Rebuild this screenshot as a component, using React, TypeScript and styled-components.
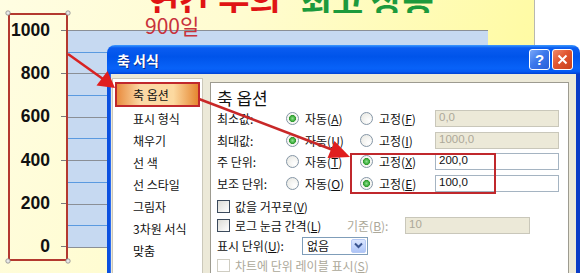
import styled, { createGlobalStyle } from 'styled-components';

const GlobalStyle = createGlobalStyle`
  html, body {
    margin: 0;
    padding: 0;
  }
  body {
    width: 585px;
    height: 273px;
    overflow: hidden;
    background: #fff;
  }
`;

const Page = styled.div`
  position: relative;
  display: flex;
  width: 585px;
  height: 273px;
  overflow: hidden;
  background: linear-gradient(115deg, #fffde2 0%, #fffcd0 35%, #fffba6 75%, #fffa94 100%);
  font-family: 'Noto Sans CJK KR', sans-serif;
`;

const AxisBox = styled.div`
  flex: 0 0 60px;
  height: 248px;
  margin: 13px 0 0 8px;
  border: 2px solid #b3392f;
  box-sizing: border-box;
`;

const AxisLabels = styled.div`
  display: flex;
  flex-direction: column;
  margin-top: -6.7px;
`;

const AxisRow = styled.div`
  height: 43.4px;
  display: flex;
  align-items: center;
  justify-content: flex-end;
`;

const AxisValue = styled.span`
  font: bold 17.5px 'Liberation Sans', Arial, sans-serif;
  color: #111;
`;

const Tick = styled.span`
  width: 5px;
  height: 1px;
  margin-left: 11px;
  background: #7c7c7c;
`;

const ChartColumn = styled.div`
  flex: 0 0 420px;
  display: flex;
  flex-direction: column;
`;

const Header = styled.div`
  height: 30px;
`;

// only the lower part of the big title is visible in the crop
const TitleStrip = styled.div`
  height: 13px;
  overflow: hidden;
  display: flex;
  align-items: flex-end;
  padding-left: 80px;
  gap: 20px;
`;

const TitleText = styled.span<{ $color: string }>`
  font-size: 34px;
  font-weight: 700;
  line-height: 34px;
  margin-bottom: -3.5px;
  color: ${(p) => p.$color};
  white-space: nowrap;
`;

const Subtitle = styled.div`
  position: relative;
  z-index: 1;
  padding-left: 77px;
  margin-top: 1px;
  font-size: 21px;
  line-height: 22px;
  color: #c8323c;
`;

const Plot = styled.div`
  height: 217px;
  background-color: #c6d9f1;
  background-image: repeating-linear-gradient(
    to bottom,
    #8a8f96 0px,
    #8a8f96 1px,
    transparent 1px,
    transparent 21.7px,
    #5a9ae0 21.7px,
    #5a9ae0 22.7px,
    transparent 22.7px,
    transparent 43.4px
  );
  border-bottom: 1px solid #8a8f96;
`;

const ChartEdge = styled.div`
  flex: 1;
  margin-left: 46px;
  background: #fff;
  border-left: 1px solid #b8b8b0;
`;

const Dialog = styled.div`
  position: absolute;
  left: 107px;
  top: 45px;
  width: 473px;
  height: 240px;
  display: flex;
  flex-direction: column;
`;

const TitleBar = styled.div`
  height: 29px;
  flex-shrink: 0;
  display: flex;
  align-items: center;
  gap: 2px;
  padding: 0 7px 0 10px;
  border-radius: 8px 8px 0 0;
  background: linear-gradient(
    to bottom,
    #3d9bff 0%,
    #0a5cf0 10%,
    #0054ea 40%,
    #0862f8 80%,
    #0559f2 92%,
    #0040d2 100%
  );
`;

const DialogTitle = styled.span`
  flex: 1;
  color: #fff;
  font-size: 14px;
  font-weight: 700;
  text-shadow: 1px 1px 0 #0a2a8a;
`;

const TitleButton = styled.div<{ $close?: boolean }>`
  width: 19px;
  height: 19px;
  border: 1px solid #fff;
  border-radius: 3px;
  display: flex;
  align-items: center;
  justify-content: center;
  color: #fff;
  font: bold 15px 'Liberation Sans', Arial, sans-serif;
  background: ${(p) =>
    p.$close
      ? 'linear-gradient(135deg, #f08a6a 0%, #e05530 45%, #c8401c 100%)'
      : 'linear-gradient(135deg, #7aa8f8 0%, #3c78ec 45%, #2a5ed8 100%)'};
`;

const DialogBody = styled.div`
  flex: 1;
  display: flex;
  gap: 7px;
  padding: 4px 0 0 2px;
  background: #ece9d8;
  border-left: 3px solid #0b50e0;
  border-right: 4px solid #0a3cc6;
  box-shadow: inset 1px 0 0 #2c6cf0;
`;

const NavList = styled.div`
  flex: 0 0 91px;
  background: #fff;
  border: 1px solid #cbc8ba;
  box-sizing: border-box;
  padding-top: 4px;
  display: flex;
  flex-direction: column;
`;

const NavItem = styled.div<{ $active?: boolean }>`
  height: 22px;
  display: flex;
  align-items: center;
  padding-left: ${(p) => (p.$active ? '17px' : '20px')};
  margin: ${(p) => (p.$active ? '0 4px 2px 3px' : '0')};
  font-size: 12px;
  color: #111;
  white-space: nowrap;
  background: ${(p) =>
    p.$active ? 'linear-gradient(to right, #e8883a 0%, #fbd9a6 30%, #fcd9a0 70%, #e58630 100%)' : 'none'};
`;

const Panel = styled.div`
  flex: 0 0 359px;
  margin-top: 4px;
  background: #fff;
  border: 1px solid #9d9b90;
  box-sizing: border-box;
  padding: 5px 0 0 6px;
  font-size: 12px;
  color: #111;
`;

const PanelHeading = styled.div`
  height: 20px;
  line-height: 20px;
  font-size: 17px;
`;

const OptionGrid = styled.div`
  display: grid;
  grid-template-columns: 69px 74px 75px 124px;
  grid-auto-rows: 21.5px;
  align-items: center;
`;

const RadioOption = styled.label`
  display: flex;
  align-items: center;
  gap: 6px;
  white-space: nowrap;
`;

const Radio = styled.span<{ $checked?: boolean }>`
  width: 13px;
  height: 13px;
  box-sizing: border-box;
  border-radius: 50%;
  border: 1px solid #8596a6;
  background: ${(p) =>
    p.$checked
      ? 'radial-gradient(circle, #8ee08e 0px, #3fae3f 2.5px, #2f9a2f 3.2px, #f4f4f0 3.8px, #fff 100%)'
      : 'radial-gradient(circle at 70% 70%, #fff 0%, #e6e6e0 100%)'};
`;

const TextBox = styled.div<{ $disabled?: boolean; $width?: number }>`
  width: ${(p) => p.$width ?? 124}px;
  height: 17px;
  box-sizing: border-box;
  padding-left: 3px;
  line-height: 15px;
  border: 1px solid ${(p) => (p.$disabled ? '#c9c7ba' : '#a5b4c2')};
  background: ${(p) => (p.$disabled ? '#ece9d8' : '#fff')};
  color: ${(p) => (p.$disabled ? '#aca899' : '#111')};
  font: 11.5px 'Liberation Sans', Arial, sans-serif;
`;

const CheckRow = styled.div<{ $height?: number; $top?: number }>`
  height: ${(p) => p.$height ?? 19}px;
  margin-top: ${(p) => p.$top ?? 0}px;
  display: flex;
  align-items: center;
  white-space: nowrap;
`;

const CheckBox = styled.span<{ $disabled?: boolean }>`
  width: 13px;
  height: 13px;
  flex-shrink: 0;
  box-sizing: border-box;
  margin-right: 5px;
  border: 1px solid ${(p) => (p.$disabled ? '#cfcdc2' : '#3b4a5c')};
  background: ${(p) => (p.$disabled ? '#fff' : 'linear-gradient(135deg, #dcdcd6 0%, #fff 100%)')};
`;

const RowLabel = styled.span<{ $width?: number; $muted?: boolean }>`
  width: ${(p) => (p.$width ? `${p.$width}px` : 'auto')};
  flex-shrink: 0;
  color: ${(p) => (p.$muted ? '#aca899' : '#111')};
`;

const Select = styled.div`
  width: 66px;
  height: 18px;
  box-sizing: border-box;
  display: flex;
  align-items: center;
  border: 1px solid #7f9db9;
  background: #fff;
`;

const SelectText = styled.span`
  flex: 1;
  padding-left: 4px;
`;

const SelectButton = styled.span`
  width: 15px;
  height: 14px;
  margin-right: 1px;
  display: flex;
  align-items: center;
  justify-content: center;
  border-radius: 2px;
  border: 1px solid #b5c9f5;
  box-sizing: border-box;
  background: linear-gradient(to bottom, #dbe6fe 0%, #c0d3fb 60%, #aec4f6 100%);
`;

const Overlay = styled.svg`
  position: absolute;
  left: 0;
  top: 0;
  width: 585px;
  height: 273px;
  pointer-events: none;
`;

const axisValues = ['1000', '800', '600', '400', '200', '0'];
const navItems = ['축 옵션', '표시 형식', '채우기', '선 색', '선 스타일', '그림자', '3차원 서식', '맞춤'];

const rows = [
  { label: '최소값:', auto: 'A', fixed: 'F', autoOn: true, value: '0,0' },
  { label: '최대값:', auto: 'U', fixed: 'I', autoOn: true, value: '1000,0' },
  { label: '주 단위:', auto: 'T', fixed: 'X', autoOn: false, value: '200,0' },
  { label: '보조 단위:', auto: 'O', fixed: 'E', autoOn: false, value: '100,0' },
];

const App = () => {
  return (
    <>
      <GlobalStyle />
      <Page>
        <AxisBox>
          <AxisLabels>
            {axisValues.map((v) => (
              <AxisRow key={v}>
                <AxisValue>{v}</AxisValue>
                <Tick />
              </AxisRow>
            ))}
          </AxisLabels>
        </AxisBox>
        <ChartColumn>
          <Header>
            <TitleStrip>
              <TitleText $color='#e01414'>연간 수의</TitleText>
              <TitleText $color='#1c9a3c'>최고 상승</TitleText>
            </TitleStrip>
            <Subtitle>900일</Subtitle>
          </Header>
          <Plot />
        </ChartColumn>
        <ChartEdge />

        <Dialog>
          <TitleBar>
            <DialogTitle>축 서식</DialogTitle>
            <TitleButton>?</TitleButton>
            <TitleButton $close>
              <svg width='11' height='11' viewBox='0 0 11 11'>
                <path d='M1.5 1.5 L9.5 9.5 M9.5 1.5 L1.5 9.5' stroke='#fff' strokeWidth='2' />
              </svg>
            </TitleButton>
          </TitleBar>
          <DialogBody>
            <NavList>
              {navItems.map((item, i) => (
                <NavItem key={item} $active={i === 0}>
                  {item}
                </NavItem>
              ))}
            </NavList>
            <Panel>
              <PanelHeading>축 옵션</PanelHeading>
              <OptionGrid>
                {rows.map((r) => (
                  <>
                    <span key={r.label}>{r.label}</span>
                    <RadioOption>
                      <Radio $checked={r.autoOn} />
                      <span>
                        자동(<u>{r.auto}</u>)
                      </span>
                    </RadioOption>
                    <RadioOption>
                      <Radio $checked={!r.autoOn} />
                      <span>
                        고정(<u>{r.fixed}</u>)
                      </span>
                    </RadioOption>
                    <TextBox $disabled={r.autoOn}>{r.value}</TextBox>
                  </>
                ))}
              </OptionGrid>
              <CheckRow $top={3}>
                <CheckBox />
                <RowLabel>
                  값을 거꾸로(<u>V</u>)
                </RowLabel>
              </CheckRow>
              <CheckRow>
                <CheckBox />
                <RowLabel $width={112}>
                  로그 눈금 간격(<u>L</u>)
                </RowLabel>
                <RowLabel $width={58} $muted>
                  기준(<u>B</u>):
                </RowLabel>
                <TextBox $disabled $width={125}>
                  10
                </TextBox>
              </CheckRow>
              <CheckRow $height={21}>
                <RowLabel $width={85}>
                  표시 단위(<u>U</u>):
                </RowLabel>
                <Select>
                  <SelectText>없음</SelectText>
                  <SelectButton>
                    <svg width='9' height='7' viewBox='0 0 9 7'>
                      <path d='M1 1.5 L4.5 5 L8 1.5' stroke='#3a5590' strokeWidth='2' fill='none' />
                    </svg>
                  </SelectButton>
                </Select>
              </CheckRow>
              <CheckRow>
                <CheckBox $disabled />
                <RowLabel $muted>
                  차트에 단위 레이블 표시(<u>S</u>)
                </RowLabel>
              </CheckRow>
            </Panel>
          </DialogBody>
        </Dialog>

        <Overlay viewBox='0 0 585 273'>
          <rect x='116' y='83' width='83' height='23' fill='none' stroke='#c0282c' strokeWidth='2' />
          <rect x='351' y='154' width='144' height='39' fill='none' stroke='#c0282c' strokeWidth='2' />
          <line x1='68' y1='54' x2='103' y2='79' stroke='#d82222' strokeWidth='2.5' />
          <polygon points='115,88 96.5,85.5 107.5,71' fill='#e01e1e' />
          <line x1='199' y1='99' x2='333' y2='150' stroke='#c82828' strokeWidth='2.5' />
          <polygon points='350,157 327.5,158 334.5,141' fill='#e01e1e' />
          {[
            [8, 13],
            [68, 13],
            [8, 261],
            [68, 261],
          ].map(([cx, cy]) => (
            <circle key={`${cx}-${cy}`} cx={cx} cy={cy} r='2.2' fill='#e8e8e8' stroke='#8a8a8a' strokeWidth='0.8' />
          ))}
        </Overlay>
      </Page>
    </>
  );
};

export default App;
